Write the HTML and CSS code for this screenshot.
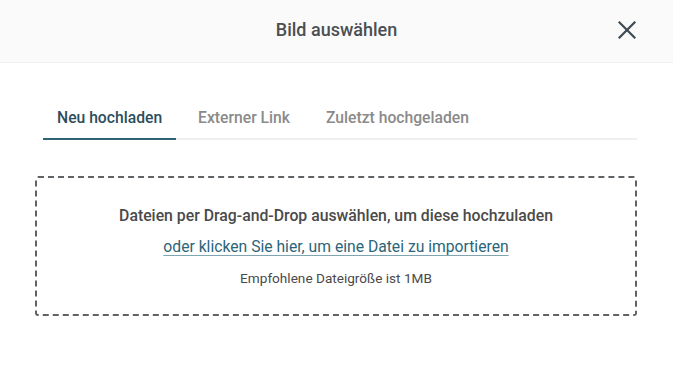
FILE: index.html
```html
<!DOCTYPE html>
<html lang="de">
<head>
<meta charset="utf-8">
<link rel="stylesheet" href="styles.css">
</head>
<body>
<div class="modal">
  <header class="modal-header">
    <h1 class="modal-title">Bild auswählen</h1>
    <button class="close" aria-label="Schließen">
      <svg width="18" height="18" viewBox="0 0 18 18"><path d="M1.5 1.5 L16.5 16.5 M16.5 1.5 L1.5 16.5" stroke="#3d4a52" stroke-width="2.2" stroke-linecap="square" fill="none"/></svg>
    </button>
  </header>
  <main class="modal-body">
    <nav class="tabs">
      <span class="tab active">Neu hochladen</span>
      <span class="tab">Externer Link</span>
      <span class="tab">Zuletzt hochgeladen</span>
    </nav>
    <div class="dropzone">
      <p class="drop-main">Dateien per Drag-and-Drop auswählen, um diese hochzuladen</p>
      <a class="drop-link" href="#">oder klicken Sie hier, um eine Datei zu importieren</a>
      <p class="drop-hint">Empfohlene Dateigröße ist 1MB</p>
    </div>
  </main>
</div>
</body>
</html>
```
FILE: styles.css
```css
* { box-sizing: border-box; }
html, body { margin: 0; padding: 0; background: #fff; }
body { font-family: Roboto, "Noto Sans", sans-serif; color: #4a4a4a; }
.modal { width: 673px; height: 388px; background: #fff; }
.modal-header {
  height: 63px;
  background: #fafafa;
  border-bottom: 1px solid #efefef;
  display: flex;
  align-items: center;
  justify-content: center;
  padding-bottom: 3px;
  position: relative;
}
.modal-title { margin: 0; font-size: 18px; font-weight: 500; color: #4b4f52; line-height: 22px; }
.close {
  position: absolute; right: 37px; top: 21px;
  width: 18px; height: 18px; padding: 0; border: 0; background: none;
  display: flex;
}
.modal-body { padding: 40px 36px 0 43px; }
.tabs {
  display: flex; gap: 8px;
  border-bottom: 2px solid #efefef;
}
.tab {
  padding: 6px 14px 11px;
  font-size: 15.7px; font-weight: 500; color: #8a8a8a;
  margin-bottom: -2px;
  border-bottom: 2px solid transparent;
  line-height: 18px;
}
.tab.active { color: #2c4e5b; border-bottom-color: #2e6373; }
.dropzone {
  margin: 36px 0 0 -8px;
  height: 140px;
  border: 2px dashed #606366;
  border-radius: 3px;
  display: flex; flex-direction: column; align-items: center;
  padding-top: 28px;
}
.drop-main { margin: 0; font-size: 15.8px; font-weight: 500; color: #4a4a4a; line-height: 20px; }
.drop-link {
  margin-top: 11px;
  font-size: 15.7px; color: #2b6579; line-height: 20px;
  text-decoration: underline; text-decoration-color: #7fa5b2; text-underline-offset: 3px;
}
.drop-hint { margin: 11px 0 0; font-size: 13.6px; color: #4a4a4a; line-height: 20px; }
```
